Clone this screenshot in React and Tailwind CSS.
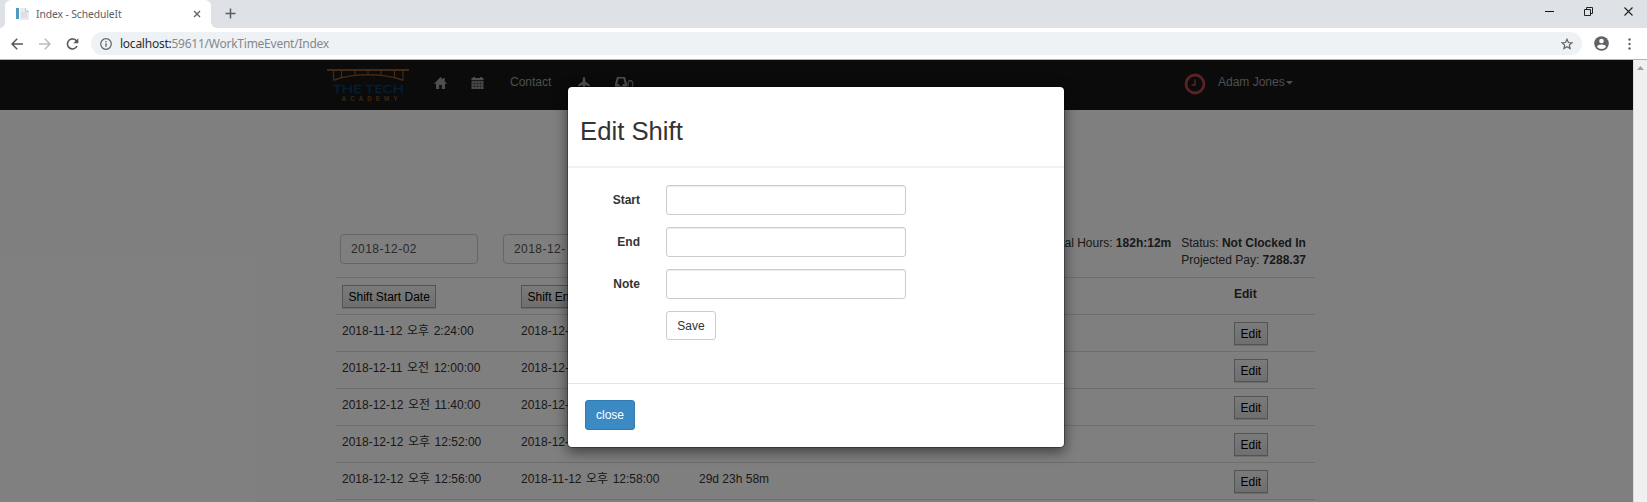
import React from "react";

const rows = [
  ["2018-11-12 오후 2:24:00", "2018-12-12 오후 2:25:00", ""],
  ["2018-12-11 오전 12:00:00", "2018-12-11 오후 2:25:00", ""],
  ["2018-12-12 오전 11:40:00", "2018-12-12 오후 2:25:00", ""],
  ["2018-12-12 오후 12:52:00", "2018-12-12 오후 2:25:00", ""],
  ["2018-12-12 오후 12:56:00", "2018-11-12 오후 12:58:00", "29d 23h 58m"],
];

function Tab() {
  return (
    <div className="flex h-7 items-end bg-[#dee1e6]">
      <div className="flex h-7 w-[5px] shrink-0 bg-white">
        <div className="h-7 w-full rounded-br-[6px] bg-[#dee1e6]" />
      </div>
      <div className="flex h-7 w-[206px] shrink-0 items-center rounded-t-[6px] bg-white pl-[11px]">
        <svg width="13" height="14" viewBox="0 0 13 14" className="shrink-0">
          <rect x="0" y="1" width="3" height="11" fill="#4f9ac4" />
          <path d="M4 1h6l3 3v9H4z" fill="#e9ebee" />
          <path d="M5 6h6M5 8h6M5 10h6" stroke="#cfd4da" strokeWidth="1" />
          <path d="M9.500 1v3.500H13" fill="none" stroke="#c8ccd2" />
        </svg>
        <span className="ml-[7px] w-[86px] whitespace-nowrap font-['Noto_Sans'] text-[10.300px] leading-4 tracking-[-0.080px] text-[#5a5e63]">
          Index - ScheduleIt
        </span>
        <svg width="8" height="8" viewBox="0 0 8 8" className="ml-[71px]">
          <path d="M1 1l6 6M7 1l-6 6" stroke="#5f6368" strokeWidth="1.400" />
        </svg>
      </div>
      <div className="flex h-7 w-[6px] bg-white">
        <div className="h-7 w-full rounded-bl-[6px] bg-[#dee1e6]" />
      </div>
      <svg width="11" height="11" viewBox="0 0 11 11" className="mb-[9px] ml-[8px]">
        <path d="M5.500 0.500v10M0.500 5.500h10" stroke="#5a5e63" strokeWidth="1.500" />
      </svg>
      <div className="ml-auto flex h-7 items-center pb-[6px] pr-[14px]">
        <svg width="9" height="9" viewBox="0 0 9 9">
          <path d="M0 4.500h9" stroke="#111" />
        </svg>
        <svg width="9" height="9" viewBox="0 0 9 9" className="ml-[30px]">
          <path d="M0.500 2.500h6v6h-6zM2.500 2.500v-2h6v6h-2" fill="none" stroke="#222" />
        </svg>
        <svg width="9" height="9" viewBox="0 0 9 9" className="ml-[31px]">
          <path d="M0.500 0.500l8 8M8.500 0.500l-8 8" stroke="#222" strokeWidth="1.100" />
        </svg>
      </div>
    </div>
  );
}

function Toolbar() {
  return (
    <div className="flex h-8 items-center border-b border-[#b2b3b5] bg-white pl-[11px]">
      <svg width="12" height="12" viewBox="0 0 12 12">
        <path d="M12 6H1M6.200 0.800L1 6l5.200 5.200" fill="none" stroke="#55595e" strokeWidth="1.500" />
      </svg>
      <svg width="12" height="12" viewBox="0 0 12 12" className="ml-[16px]">
        <path d="M0 6h11M5.800 0.800L11 6l-5.200 5.200" fill="none" stroke="#b9bbbe" strokeWidth="1.500" />
      </svg>
      <svg width="13" height="12" viewBox="0 0 13 12" className="ml-[15px]">
        <path d="M10.700 3.300A5 5 0 1 0 11 8" fill="none" stroke="#55595e" strokeWidth="1.600" />
        <path d="M12.300 0.300v5h-5z" fill="#55595e" />
      </svg>
      <div className="ml-[12px] flex h-[23px] w-[1491px] items-center rounded-full bg-[#eff2f4] pl-[9px] pr-[9px]">
        <svg width="12" height="12" viewBox="0 0 12 12">
          <circle cx="6" cy="6" r="5.300" fill="none" stroke="#5f6368" strokeWidth="1.200" />
          <path d="M6 5.200v3.600M6 2.900v1.300" stroke="#5f6368" strokeWidth="1.300" />
        </svg>
        <span className="ml-[8px] whitespace-nowrap font-['Noto_Sans'] text-[12px] leading-4 tracking-[-0.245px] text-[#84888c]">
          <span className="text-[#2a2d30]">localhost:</span>59611/WorkTimeEvent/Index
        </span>
        <svg width="12" height="12" viewBox="0 0 12 12" className="ml-auto">
          <path d="M6 1.300l1.400 3.200 3.500.3-2.600 2.300.8 3.400L6 8.700l-3.100 1.800.8-3.400L1.100 4.800l3.500-.3z" fill="none" stroke="#5f6368" strokeWidth="1.200" />
        </svg>
      </div>
      <svg width="15" height="15" viewBox="0 0 15 15" className="ml-[12px]">
        <circle cx="7.500" cy="7.500" r="7.300" fill="#5f6368" />
        <circle cx="7.500" cy="5" r="2.300" fill="#fff" />
        <path d="M3 10.700c.5-3 8.500-3 9 0-2 3-7 3-9 0z" fill="#fff" />
      </svg>
      <svg width="3" height="12" viewBox="0 0 3 12" className="ml-[19px]">
        <circle cx="1.500" cy="1.500" r="1.200" fill="#5f6368" />
        <circle cx="1.500" cy="6" r="1.200" fill="#5f6368" />
        <circle cx="1.500" cy="10.500" r="1.200" fill="#5f6368" />
      </svg>
    </div>
  );
}

function Logo() {
  return (
    <svg width="82" height="34" viewBox="0 0 82 34" className="mt-2 shrink-0">
      <path d="M0 2h82" stroke="#8a5428" strokeWidth="2" />
      <path d="M6.500 3v9.500M14.500 3v6M28 3v4M41 3v3M54 3v4M67.500 3v6M76 3v9.500" stroke="#8a5428" strokeWidth="1.200" />
      <path d="M6.500 12.300C26 5 56 5 76 12.300" fill="none" stroke="#8a5428" strokeWidth="1.500" />
      <text x="6" y="25" textLength="71" lengthAdjust="spacingAndGlyphs" fontFamily="Lato, sans-serif" fontSize="11" fill="#093c64" stroke="#093c64" strokeWidth="0.300">THE TECH</text>
      <text x="14.500" y="32.700" textLength="56" fontFamily="Liberation Sans, sans-serif" fontSize="6.300" fontWeight="bold" fill="#7d4c25">ACADEMY</text>
    </svg>
  );
}

function Navbar() {
  return (
    <div className="flex h-[50px] items-start bg-[#161616] pl-[327px] text-[#9d9d9d]">
      <Logo />
      <svg width="13" height="12" viewBox="0 0 13 12" className="ml-[25px] mt-[17px]" fill="#9d9d9d">
        <path d="M6.500 0L9 2.500V1h1.700v3.200L13 6.700h-2V12H7.800V8H5.200v4H2V6.700H0z" />
      </svg>
      <svg width="13" height="12" viewBox="0 0 13 12" className="ml-[24px] mt-[17px]" fill="#9d9d9d">
        <path d="M0.500 1H2V0h2v1h5V0h2v1h1.500v2.200h-12zM0.500 4.200h12V12h-12z" />
        <path d="M0.500 6.700h12M0.500 9.300h12" stroke="#161616" strokeWidth=".5" />
        <path d="M3.500 5V12M6.500 5V12M9.500 5V12" stroke="#161616" strokeWidth=".3" />
      </svg>
      <span className="ml-[26px] mt-[14px] w-[42px] leading-[17px]">Contact</span>
      <svg width="12" height="12" viewBox="0 0 12 12" className="ml-[26px] mt-[17px]" fill="#9d9d9d">
        <path d="M6 0c.8 0 1.200 1 1.200 2v2.300L12 8v1.500L7.200 8v2l1.500 1v1H3.300v-1l1.500-1V8L0 9.500V8l4.800-3.700V2C4.800 1 5.200 0 6 0z" />
      </svg>
      <svg width="12" height="12" viewBox="0 0 12 12" className="ml-[25px] mt-[17px]" fill="#9d9d9d">
        <path fillRule="evenodd" d="M2 0h8l2 7v5H0V7zM3.500 1.500L2.200 7H4l.8 2h2.400L8 7h1.800L8.500 1.500z" />
      </svg>
      <span className="mt-[17px] w-[7px] leading-[17px]">0</span>
      <svg width="22" height="22" viewBox="0 0 22 22" className="ml-[550px] mt-[13px]">
        <circle cx="11" cy="11" r="9" fill="none" stroke="#b94444" strokeWidth="2.800" />
        <path d="M11 6.500V12H7.500" fill="none" stroke="#b94444" strokeWidth="1.500" />
      </svg>
      <span className="ml-[12px] mt-[14px] whitespace-nowrap leading-[17px]">Adam Jones</span>
      <svg width="7" height="4" viewBox="0 0 7 4" className="ml-px mt-[21px]" fill="#9d9d9d">
        <path d="M0 0h7L3.500 3.500z" />
      </svg>
    </div>
  );
}

function DateBox({ value }) {
  return (
    <div className="flex h-[30px] w-[138px] items-center rounded-[4px] border border-[#cccccc] pl-[10px] tracking-[0.450px] text-[#555]">
      {value}
    </div>
  );
}

function OldButton({ children }) {
  return (
    <button className="h-[23px] border border-[#a6a6a6] bg-linear-to-b from-[#f6f6f6] to-[#dedede] px-[5.500px] leading-none text-black shadow-[0_1px_0_#d8d8d8]">
      {children}
    </button>
  );
}

function Page() {
  const row = "grid h-[37px] grid-cols-[179px_178px_535px_87px] border-t border-[#dddddd] [&>*]:pl-[6px]";
  return (
    <div className="ml-[336px] w-[979px] text-[#333]">
      <div className="flex h-[167px] items-start pl-1 pt-[124px]">
        <DateBox value="2018-12-02" />
        <div className="w-[25px]" />
        <DateBox value="2018-12-" />
        <div className="ml-auto flex gap-[10px] whitespace-nowrap pr-[9px] pt-px leading-[17px]">
          <div>Total Hours: <b>182h:12m</b></div>
          <div>
            <div>Status: <b>Not Clocked In</b></div>
            <div>Projected Pay: <b>7288.37</b></div>
          </div>
        </div>
      </div>
      <div className={row}>
        <div className="pt-[7px]"><OldButton>Shift Start Date</OldButton></div>
        <div className="pt-[7px]"><OldButton>Shift End Date</OldButton></div>
        <div />
        <div className="pt-[8px] font-bold leading-[17px]">Edit</div>
      </div>
      {rows.map((r) => (
        <div key={r[0]} className={row}>
          <div className="pt-[8px] leading-[17px] [word-spacing:1.200px]">{r[0]}</div>
          <div className="pt-[8px] leading-[17px] [word-spacing:1.200px]">{r[1]}</div>
          <div className="pt-[8px] leading-[17px]">{r[2]}</div>
          <div className="pt-[7px]"><OldButton>Edit</OldButton></div>
        </div>
      ))}
      <div className="border-t border-[#dddddd]" />
    </div>
  );
}

function Modal() {
  return (
    <div className="absolute left-[567px] top-[26px] h-[362px] w-[498px] rounded-[5px] border border-black/30 bg-white bg-clip-padding text-[#333] shadow-[0_4px_13px_rgba(0,0,0,0.5)]">
      <div className="h-[81px] border-b-2 border-[#f1f1f1] pl-[12px] pt-[30px] text-[25.700px] leading-[28px]">Edit Shift</div>
      <div className="flex h-[215px] flex-col gap-[12px] pt-[17px]">
        {["Start", "End", "Note"].map((label) => (
          <div key={label} className="flex h-[30px] items-center">
            <label className="w-[72px] text-right font-bold">{label}</label>
            <input className="ml-[26px] h-[30px] w-[240px] rounded-[3px] border border-[#cccccc] shadow-[inset_0_1px_1px_rgba(0,0,0,0.075)]" />
          </div>
        ))}
        <button className="ml-[98px] h-[29px] w-[50px] rounded-[3px] border border-[#cccccc]">Save</button>
      </div>
      <div className="border-t border-[#e5e5e5] pl-[17px] pt-[16px]">
        <button className="h-[30px] w-[50px] rounded-[3px] border border-[#2e7bb8] bg-[#3b8ac4] text-white">close</button>
      </div>
    </div>
  );
}

export default function App() {
  return (
    <div className="flex h-[502px] w-[1647px] flex-col overflow-hidden bg-white font-['Liberation_Sans','Noto_Sans_CJK_KR',sans-serif] text-[12px]">
      <Tab />
      <Toolbar />
      <div className="relative flex h-[442px] overflow-hidden">
        <div className="relative h-[442px] w-[1633px] overflow-hidden bg-white">
          <Navbar />
          <Page />
          <div className="absolute inset-0 bg-black/50" />
          <Modal />
        </div>
        <div className="flex h-full w-[14px] justify-center border-l border-[#dcdcdc] bg-[#f0f0f0] pt-[6px]">
          <svg width="7" height="4" viewBox="0 0 7 4">
            <path d="M3.500 0L7 4H0z" fill="#a0a0a0" />
          </svg>
        </div>
      </div>
    </div>
  );
}
